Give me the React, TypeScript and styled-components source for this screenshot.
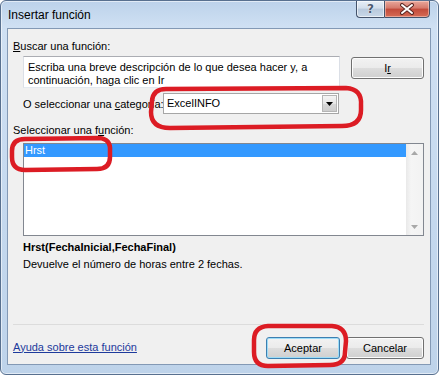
import React from 'react'
import styled, { createGlobalStyle } from 'styled-components'

const GlobalStyle = createGlobalStyle`
    html, body {
        margin: 0;
        padding: 0;
        background: #ffffff;
    }
    body {
        font-family: "Liberation Sans", Arial, sans-serif;
        font-size: 11px;
        color: #000;
    }
`

export default function App() {
    return (
        <>
            <GlobalStyle />
            <Window>
                <TitleBar>
                    <Title>Insertar función</Title>
                    <CaptionButtons>
                        <HelpButton>?</HelpButton>
                        <CloseButton>
                            <svg width='16' height='12' viewBox='0 0 16 12'>
                                <path d='M3 2 L13 10 M13 2 L3 10' stroke='#5a2622' strokeWidth='4' strokeLinecap='round' />
                                <path d='M3 2 L13 10 M13 2 L3 10' stroke='#ffffff' strokeWidth='2' strokeLinecap='round' />
                            </svg>
                        </CloseButton>
                    </CaptionButtons>
                </TitleBar>

                <Client>
                    <FieldLabel>
                        <u>B</u>uscar una función:
                    </FieldLabel>
                    <SearchRow>
                        <SearchBox>
                            Escriba una breve descripción de lo que desea hacer y, a continuación, haga clic en Ir
                        </SearchBox>
                        <PushButton $width={73} $top={1}>
                            I<u>r</u>
                        </PushButton>
                    </SearchRow>

                    <CategoryRow>
                        <CategoryLabel>
                            O seleccionar una <u>c</u>ategoría:
                        </CategoryLabel>
                        <Combo>
                            <ComboText>ExcelINFO</ComboText>
                            <ComboArrow>
                                <svg width='7' height='4' viewBox='0 0 7 4'>
                                    <path d='M0 0 H7 L3.5 4 Z' fill='#000' />
                                </svg>
                            </ComboArrow>
                        </Combo>
                    </CategoryRow>

                    <FieldLabel $top={9}>
                        Seleccionar una f<u>u</u>nción:
                    </FieldLabel>
                    <FunctionList>
                        <Items>
                            <Item $selected>Hrst</Item>
                        </Items>
                        <ScrollBar>
                            <ScrollArrow>
                                <svg width='7' height='4' viewBox='0 0 7 4'>
                                    <path d='M0 4 H7 L3.5 0 Z' fill='#a8a8a8' />
                                </svg>
                            </ScrollArrow>
                            <ScrollArrow>
                                <svg width='7' height='4' viewBox='0 0 7 4'>
                                    <path d='M0 0 H7 L3.5 4 Z' fill='#a8a8a8' />
                                </svg>
                            </ScrollArrow>
                        </ScrollBar>
                    </FunctionList>

                    <Signature>Hrst(FechaInicial,FechaFinal)</Signature>
                    <Description>Devuelve el número de horas entre 2 fechas.</Description>

                    <Separator />
                    <Footer>
                        <HelpLink href='#'>Ayuda sobre esta función</HelpLink>
                        <PushButton $width={74} $default>
                            Aceptar
                        </PushButton>
                        <PushButton $width={78}>Cancelar</PushButton>
                    </Footer>
                </Client>

                <Marks width='439' height='375' viewBox='0 0 439 375'>
                    <path d='M166 89 L346 88 Q362 89 361 105 L361 110 Q361 126 342 126 L170 128 Q151 128 151 112 L152 101 Q153 89 166 89 Z' />
                    <path d='M25 139 L99 138 Q111 139 110 151 L110 157 Q110 169 97 169 L25 170 Q12 170 12 157 L12 151 Q12 139 25 139 Z' />
                    <path d='M268 326 L332 326 Q346 327 346 341 L345 352 Q345 365 330 365 L268 366 Q254 366 254 352 L254 340 Q254 327 268 326 Z' />
                </Marks>
            </Window>
        </>
    )
}

const Window = styled.div`
    position: relative;
    width: 439px;
    height: 375px;
    box-sizing: border-box;
    border: 1px solid #58708f;
    border-radius: 6px;
    background: linear-gradient(to bottom, #bcd2ea 0px, #cfe0f3 26px, #c4d8ee 60%, #bed3ea 100%);
    box-shadow: inset 0 0 0 1px rgba(255, 255, 255, 0.55);
    padding: 0 7px 9px 6px;
    display: flex;
    flex-direction: column;
    overflow: hidden;
`

const TitleBar = styled.div`
    height: 27px;
    display: flex;
    justify-content: space-between;
    align-items: flex-start;
`

const Title = styled.div`
    font-family: "Liberation Sans", Arial, sans-serif;
    font-size: 12px;
    line-height: 15px;
    padding: 7px 0 0 1px;
    color: #000;
`

const CaptionButtons = styled.div`
    display: flex;
    margin-top: -1px;
    margin-right: 1px;
`

const HelpButton = styled.div`
    width: 28px;
    height: 18px;
    box-sizing: border-box;
    border: 1px solid #44536b;
    border-right: none;
    border-radius: 0 0 0 4px;
    background: linear-gradient(to bottom, #e6eef7 0%, #d2deeb 45%, #b8c9dc 50%, #c9d8e8 100%);
    box-shadow: inset 0 0 0 1px rgba(255, 255, 255, 0.6);
    display: flex;
    justify-content: center;
    align-items: center;
    font-family: "DejaVu Sans", sans-serif;
    font-weight: bold;
    font-size: 12px;
    color: #4b5a70;
    text-shadow: 0 0 1px #fff, 0 0 1px #fff;
`

const CloseButton = styled.div`
    width: 46px;
    height: 18px;
    box-sizing: border-box;
    border: 1px solid #44536b;
    border-radius: 0 0 4px 0;
    background: linear-gradient(to bottom, #e8a89c 0%, #d5786a 45%, #c24a3a 50%, #d66b55 100%);
    box-shadow: inset 0 0 0 1px rgba(255, 220, 210, 0.5);
    display: flex;
    justify-content: center;
    align-items: center;
`

const Client = styled.div`
    flex: 1;
    background: #f0f0f0;
    border: 1px solid #8399b5;
    padding: 10px 6px 5px 5px;
    display: flex;
    flex-direction: column;
`

const FieldLabel = styled.div<{ $top?: number }>`
    line-height: 14px;
    margin-top: ${(p) => p.$top ?? 0}px;
`

const SearchRow = styled.div`
    display: flex;
    justify-content: space-between;
    align-items: flex-start;
    margin: 3px 0 0 10px;
`

const SearchBox = styled.div`
    width: 317px;
    height: 32px;
    box-sizing: border-box;
    background: #fff;
    border: 1px solid #abadb3;
    border-left-color: #dbdfe6;
    border-right-color: #dbdfe6;
    border-bottom-color: #e3e9ef;
    padding: 4px 4px 0 4px;
    line-height: 13px;
    overflow: hidden;
`

const PushButton = styled.button<{ $width: number; $top?: number; $default?: boolean }>`
    width: ${(p) => p.$width}px;
    height: 22px;
    margin-top: ${(p) => p.$top ?? 0}px;
    box-sizing: border-box;
    padding: 0;
    font-family: "Liberation Sans", Arial, sans-serif;
    font-size: 11px;
    color: #000;
    border: 1px solid ${(p) => (p.$default ? '#3c7fb1' : '#707070')};
    border-radius: 3px;
    background: linear-gradient(to bottom, #f2f2f2 0%, #ebebeb 50%, #dddddd 50%, #cfcfcf 100%);
    box-shadow: inset 0 0 0 1px ${(p) => (p.$default ? '#9ddcf7' : '#fcfcfc')};

    u {
        text-decoration: underline;
    }
`

const CategoryRow = styled.div`
    display: flex;
    align-items: center;
    margin: 5px 0 0 10px;
`

const CategoryLabel = styled.div`
    width: 140px;
    line-height: 14px;
    white-space: nowrap;
`

const Combo = styled.div`
    width: 176px;
    height: 21px;
    box-sizing: border-box;
    background: #fff;
    border: 1px solid #a6a6a6;
    display: flex;
    align-items: stretch;
`

const ComboText = styled.div`
    flex: 1;
    padding-left: 3px;
    line-height: 19px;
`

const ComboArrow = styled.div`
    width: 15px;
    margin: 1px;
    box-sizing: border-box;
    border: 1px solid #b5b5b5;
    background: linear-gradient(to bottom, #f4f4f4 0%, #e6e6e6 50%, #d8d8d8 51%, #cdcdcd 100%);
    display: flex;
    justify-content: center;
    align-items: center;
`

const FunctionList = styled.div`
    height: 93px;
    margin: 6px 0 0 10px;
    box-sizing: border-box;
    background: #fff;
    border: 1px solid #828790;
    display: flex;
`

const Items = styled.div`
    flex: 1;
    padding: 0;
`

const Item = styled.div<{ $selected?: boolean }>`
    height: 13px;
    line-height: 13px;
    padding-left: 1px;
    background: ${(p) => (p.$selected ? '#3399ff' : 'transparent')};
    color: ${(p) => (p.$selected ? '#fff' : '#000')};
`

const ScrollBar = styled.div`
    width: 17px;
    background: linear-gradient(to right, #e9e9e9 0%, #f5f5f5 30%, #f2f2f2 100%);
    display: flex;
    flex-direction: column;
    justify-content: space-between;
`

const ScrollArrow = styled.div`
    height: 17px;
    display: flex;
    justify-content: center;
    align-items: center;
`

const Signature = styled.div`
    margin: 4px 0 0 10px;
    line-height: 14px;
    font-weight: bold;
`

const Description = styled.div`
    margin: 3px 0 0 10px;
    line-height: 14px;
`

const Separator = styled.div`
    margin-top: auto;
    height: 1px;
    background: #dcdcdc;
`

const Footer = styled.div`
    margin-top: 12px;
    display: flex;
    align-items: center;
    gap: 6px;
`

const HelpLink = styled.a`
    flex: 1;
    margin-bottom: 3px;
    line-height: 14px;
    color: #1d3a9c;
    text-decoration: underline;
`

const Marks = styled.svg`
    position: absolute;
    top: -1px;
    left: -1px;
    pointer-events: none;

    path {
        fill: none;
        stroke: #dc1c24;
        stroke-width: 4.5;
        stroke-linejoin: round;
    }
`
